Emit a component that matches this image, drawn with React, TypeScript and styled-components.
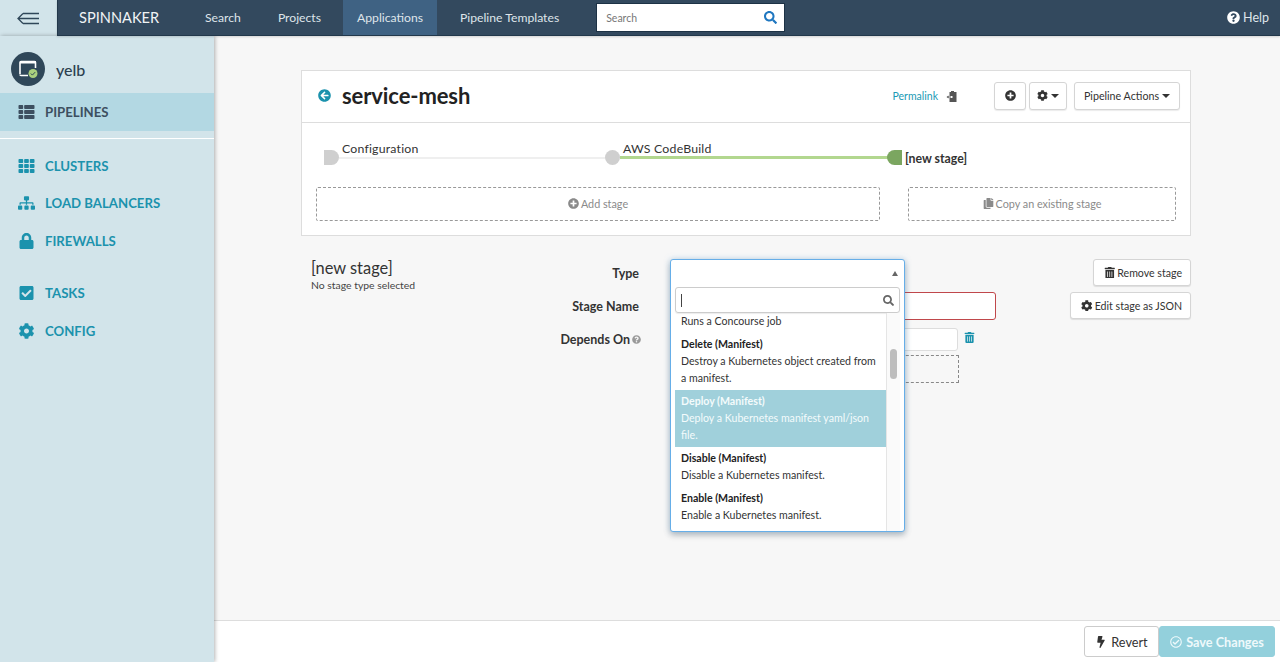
import React from "react";
import styled, { createGlobalStyle } from "styled-components";
import {
  FaThList, FaTh, FaSitemap, FaLock, FaCheckSquare, FaCog, FaPlusCircle, FaArrowCircleLeft,
  FaTrashAlt, FaCopy, FaQuestionCircle, FaBolt, FaRegCheckCircle, FaSearch,
} from "react-icons/fa";

const Global = createGlobalStyle`
  html, body { margin: 0; padding: 0; height: 100%; overflow: hidden; }
  body { font-family: "Lato", "Liberation Sans", sans-serif; font-size: 12px; color: #222; }
  * { box-sizing: border-box; }
`;

const Shell = styled.div`
  width: 1280px; height: 662px; display: grid; overflow: hidden;
  grid-template-columns: 57px 157px 1fr; grid-template-rows: 36px 1fr; background: #f7f7f7;
`;
const Toggle = styled.div`
  grid-column: 1; grid-row: 1; background: #d2e4ea; display: flex; align-items: center; justify-content: center; padding-right: 1px;
`;
const TopBar = styled.header`
  grid-column: 2 / 4; grid-row: 1; background: #33495e; display: flex; align-items: center; color: #e6ebef;
  border-bottom: 1px solid #22384b; border-left: 1px solid #22384b; box-shadow: 0 1px 2px rgba(0,0,0,.15); z-index: 3; padding-left: 21px;
`;
const Brand = styled.div`font-size: 14.6px; width: 112px; font-weight: 400; color: #f0f3f5;`;
const NavLink = styled.div<{ $active?: boolean; $ml?: number; $pl?: number }>`
  height: 35px; display: flex; align-items: center; padding: 0 14px 0 ${p => p.$pl ?? 14}px; font-size: 12.2px; color: #dfe5ea;
  background: ${p => (p.$active ? "#3f6283" : "transparent")}; margin-left: ${p => p.$ml ?? 0}px;
`;
const SearchBox = styled.div`
  width: 189px; height: 29px; margin-left: 23px; background: #fff; display: flex; align-items: center; justify-content: space-between;
  padding: 0 7px 0 9px; font-size: 10.5px; color: #777; border: 1px solid #1d3245; svg { color: #1f77c0; font-size: 13px; }
`;
const Help = styled.div`
  margin-left: auto; padding-right: 11px; display: flex; align-items: center; gap: 3px; font-size: 12.5px; color: #dfe5ea; svg { color: #fff; font-size: 13px; }
`;
const Sidebar = styled.aside`
  grid-column: 1 / 3; grid-row: 2; background: #d2e4ea; box-shadow: 1px 0 4px rgba(0,0,0,.3); z-index: 2; padding-top: 16px; display: flex; flex-direction: column;
`;
const AppRow = styled.div`display: flex; align-items: center; padding-left: 11px; gap: 11px; height: 34px; margin-bottom: 7px;`;
const AppBadge = styled.div`
  width: 34px; height: 34px; border-radius: 50%; background: #2f4759; display: flex; align-items: center; justify-content: center;
`;
const AppName = styled.div`font-size: 16px; font-weight: 500; color: #2c3f50;`;
const SideItem = styled.div<{ $active?: boolean; $gap?: number }>`
  height: 37.5px; display: flex; align-items: center; padding-left: 18px; gap: 10px; font-size: 13.2px; font-weight: 700;
  background: ${p => (p.$active ? "#b3d8e3" : "transparent")}; color: ${p => (p.$active ? "#3d4f60" : "#1b92ad")};
  margin-top: ${p => p.$gap ?? 0}px;
  svg { font-size: 16px; width: 17px; flex: none; }
`;
const SideRule = styled.div`height: 1px; background: #fff; margin: 7px 0 8.5px;`;
const Main = styled.main`grid-column: 3; grid-row: 2; display: flex; flex-direction: column; min-height: 0;`;
const Content = styled.div`flex: 1; padding: 34px 89px 0 87px; min-height: 0;`;
const Card = styled.section`background: #fff; border: 1px solid #ddd; height: 166px;`;
const CardHead = styled.div`
  height: 52px; border-bottom: 1px solid #ddd; display: flex; align-items: center; padding: 0 10px 2px 16px;
`;
const BackIcon = styled.span`color: #1b92ad; font-size: 13px; display: flex; margin-right: 11px;`;
const Title = styled.h1`margin: 0; font-size: 22px; font-weight: 700; color: #222; letter-spacing: -.1px;`;
const Permalink = styled.a`margin-left: auto; color: #1b9ab5; font-size: 10.5px;`;
const ClipIcon = styled.span`display: flex; margin: 0 33px 0 8px;`;
const HeadBtn = styled.button<{ $w: number; $ml?: number }>`
  width: ${p => p.$w}px; height: 28px; margin-left: ${p => p.$ml ?? 3}px; padding: 0; background: #fff; border: 1px solid #d5d5d5; border-radius: 3px;
  box-shadow: 0 1px 1px rgba(0,0,0,.08); font: inherit; font-size: 10.7px; color: #333; display: flex; align-items: center; justify-content: center; gap: 3px;
`;
const Caret = styled.span`
  display: inline-block; width: 0; height: 0; border-left: 4px solid transparent; border-right: 4px solid transparent; border-top: 4px solid #333;
`;
const Graph = styled.div`position: relative; height: 64px;`;
const GraphLine = styled.div<{ $x: number; $w: number; $on?: boolean }>`
  position: absolute; left: ${p => p.$x}px; width: ${p => p.$w}px; top: ${p => (p.$on ? 33 : 34)}px; height: ${p => (p.$on ? 3 : 2)}px;
  background: ${p => (p.$on ? "#b2d78f" : "#efefef")};
`;
const Node = styled.div<{ $x: number; $shape: "start" | "mid" | "end" }>`
  position: absolute; left: ${p => p.$x}px; top: 27px; width: 15px; height: 15px;
  background: ${p => (p.$shape === "end" ? "#7ba660" : "#cfcfcf")};
  border-radius: ${p => (p.$shape === "start" ? "0 8px 8px 0" : p.$shape === "mid" ? "50%" : "8px 0 0 8px")};
`;
const NodeLabel = styled.div<{ $x: number; $y: number; $strong?: boolean }>`
  position: absolute; left: ${p => p.$x}px; top: ${p => p.$y}px; line-height: 16px; font-size: 12.3px; letter-spacing: ${p => (p.$strong ? 0 : ".2px")};
  font-weight: ${p => (p.$strong ? 700 : 400)}; color: #333; white-space: nowrap;
`;
const AddRow = styled.div`display: flex; justify-content: space-between; padding: 0 14px;`;
const DashedBtn = styled.div<{ $w: number }>`
  width: ${p => p.$w}px; height: 34px; border: 1px dashed #999; border-radius: 2px; display: flex; align-items: center; justify-content: center; gap: 2px;
  color: #8a8a8a; font-size: 10.8px; padding-bottom: 2px; svg { font-size: 11px; }
`;
const Editor = styled.div`display: flex; margin-top: 23px; padding: 0 0 0 10px;`;
const StageIntro = styled.div`width: 228px; padding-top: 0;`;
const StageTitle = styled.div`font-size: 16.4px; line-height: 18px; color: #333;`;
const StageSub = styled.div`font-size: 10.4px; line-height: 13px; margin-top: 2px; color: #444;`;
const Form = styled.div`display: grid; grid-template-columns: 100px 327px; column-gap: 31px; grid-auto-rows: 33px; width: 458px;`;
const FieldLabel = styled.div`
  font-size: 12.5px; font-weight: 700; color: #333; text-align: right; padding-top: 7px; display: flex; justify-content: flex-end; gap: 2px;
  svg { font-size: 9px; color: #999; margin: 3px -2px 0 0; }
`;
const FieldCell = styled.div`position: relative; display: flex; align-items: flex-start; gap: 6px;`;
const FieldInput = styled.div<{ $w: number; $h: number; $top?: number; $bad?: boolean }>`
  width: ${p => p.$w}px; height: ${p => p.$h}px; margin-top: ${p => p.$top ?? 0}px; background: #fff; border: 1px solid ${p => (p.$bad ? "#c0474b" : "#ddd")}; border-radius: 3px; flex: none;
`;
const DashedField = styled.div`position: absolute; left: 0; top: 30px; width: 289px; height: 28px; border: 1px dashed #888;`;
const TrashLink = styled.span`color: #1b92ad; font-size: 11px; display: flex; margin-top: 7px;`;
const SideActions = styled.div`margin-left: auto; display: flex; flex-direction: column; align-items: flex-end; gap: 6px;`;
const ActionBtn = styled.button`
  height: 27px; padding: 0 8px 0 10px; background: #fff; border: 1px solid #d5d5d5; border-radius: 3px; box-shadow: 0 1px 1px rgba(0,0,0,.1);
  font: inherit; font-size: 10.6px; color: #333; display: flex; align-items: center; gap: 2px; svg { font-size: 11.5px; }
`;
const Dropdown = styled.div`
  position: absolute; left: 0; top: 0; width: 235px; height: 273px; background: #fff; border: 1px solid #66aee8; border-radius: 3px;
  box-shadow: 0 0 6px rgba(102,174,232,.35), 0 3px 6px rgba(0,0,0,.25); z-index: 5; padding: 0 4px; display: flex; flex-direction: column;
`;
const TypeBar = styled.div`height: 27px; display: flex; justify-content: flex-end; align-items: center; padding: 0 2px 1px 0;`;
const UpCaret = styled.span`width: 0; height: 0; border-left: 3px solid transparent; border-right: 3px solid transparent; border-bottom: 5px solid #666;`;
const DropSearch = styled.div`
  height: 26px; flex: none; border: 1px solid #ccc; border-radius: 3px; box-shadow: 0 1px 1px rgba(0,0,0,.08); display: flex; align-items: center; justify-content: space-between;
  padding: 0 5px; svg { font-size: 11px; color: #666; }
`;
const Cursor = styled.span`width: 1px; height: 13px; background: #444;`;
const ListWrap = styled.div`flex: 1; display: flex; min-height: 0; overflow: hidden;`;
const OptionList = styled.div`flex: 1; min-width: 0; overflow: hidden;`;
const Option = styled.div<{ $on?: boolean; $cut?: boolean }>`
  padding: ${p => (p.$cut ? "0 6px 3px" : "3px 6px")}; font-size: 10.6px; line-height: 17px;
  background: ${p => (p.$on ? "#a0d0db" : "transparent")}; color: ${p => (p.$on ? "#f4fbfc" : "#333")};
  b { display: block; color: ${p => (p.$on ? "#f4fbfc" : "#222")}; font-weight: 700; }
`;
const Track = styled.div`width: 14px; flex: none; background: #fafafa; border-left: 1px solid #e5e5e5; padding: 36px 3px 0 3px;`;
const Thumb = styled.div`height: 30px; border-radius: 4px; background: #bdbdbd;`;
const Footer = styled.footer`
  height: 42px; flex: none; background: #fff; border-top: 1px solid #ddd; display: flex; justify-content: flex-end; padding: 5px 5px 0 0;
`;
const FootBtn = styled.button<{ $save?: boolean }>`
  height: 31px; border: 1px solid ${p => (p.$save ? "#93d0dc" : "#ccc")}; border-radius: 3px; background: ${p => (p.$save ? "#93d0dc" : "#fff")};
  color: ${p => (p.$save ? "#eef9fb" : "#333")}; font: inherit; font-size: 12.7px; font-weight: ${p => (p.$save ? 700 : 400)};
  width: ${p => (p.$save ? 116 : 75)}px; display: flex; align-items: center; justify-content: center; gap: 4px; padding: 0; svg { font-size: 12px; }
`;

const options = [
  { t: "Delete (Manifest)", d: "Destroy a Kubernetes object created from a manifest." },
  { t: "Deploy (Manifest)", d: "Deploy a Kubernetes manifest yaml/json file.", on: true },
  { t: "Disable (Manifest)", d: "Disable a Kubernetes manifest." },
  { t: "Enable (Manifest)", d: "Enable a Kubernetes manifest." },
];

export default function App() {
  return (
    <Shell>
      <Global />
      <Toggle>
        <svg width="23" height="13" viewBox="0 0 23 13" fill="none" stroke="#2f4759" strokeWidth="1.3">
          <path d="M6 1.5H22M1 6.5H22M6 11.5H22M6 1.5L1 6.5L6 11.5" />
        </svg>
      </Toggle>
      <TopBar>
        <Brand>SPINNAKER</Brand>
        <NavLink>Search</NavLink>
        <NavLink $ml={9} $pl={14}>Projects</NavLink>
        <NavLink $active $ml={8}>Applications</NavLink>
        <NavLink $ml={9}>Pipeline Templates</NavLink>
        <SearchBox>Search<FaSearch /></SearchBox>
        <Help><FaQuestionCircle />Help</Help>
      </TopBar>
      <Sidebar>
        <AppRow>
          <AppBadge>
            <svg width="22" height="20" viewBox="0 0 22 20">
              <path d="M3 15V3.5A1 1 0 0 1 4 2.5H17.5A1 1 0 0 1 18.5 3.5V9M3 15.5A1 1 0 0 0 4 16.5H11" fill="none" stroke="#fff" strokeWidth="1.6" />
              <rect x="3" y="2" width="16" height="2.5" fill="#fff" />
              <circle cx="16" cy="14.5" r="4.5" fill="#a9cf7e" />
              <path d="M13.8 14.5l1.6 1.6 2.8-3" fill="none" stroke="#2f4759" strokeWidth="1" />
            </svg>
          </AppBadge>
          <AppName>yelb</AppName>
        </AppRow>
        <SideItem $active><FaThList />PIPELINES</SideItem>
        <SideRule />
        <SideItem><FaTh />CLUSTERS</SideItem>
        <SideItem><FaSitemap />LOAD BALANCERS</SideItem>
        <SideItem><FaLock />FIREWALLS</SideItem>
        <SideItem $gap={15}><FaCheckSquare />TASKS</SideItem>
        <SideItem><FaCog />CONFIG</SideItem>
      </Sidebar>
      <Main>
        <Content>
          <Card>
            <CardHead>
              <BackIcon><FaArrowCircleLeft /></BackIcon>
              <Title>service-mesh</Title>
              <Permalink>Permalink</Permalink>
              <ClipIcon>
                <svg width="12" height="12" viewBox="0 0 12 12" fill="#555">
                  <path d="M3.5 2H5V1h3v1h2.5v10H3.5V8h3V6h-3zM0.5 7l2-1.5V6.5H5v1H2.5v1z" />
                </svg>
              </ClipIcon>
              <HeadBtn $w={32}><FaPlusCircle size={11} /></HeadBtn>
              <HeadBtn $w={38}><FaCog size={11} /><Caret /></HeadBtn>
              <HeadBtn $w={106} $ml={7}>Pipeline Actions<Caret /></HeadBtn>
            </CardHead>
            <Graph>
              <GraphLine $x={37} $w={268} />
              <GraphLine $x={318} $w={268} $on />
              <Node $x={22} $shape="start" />
              <Node $x={303} $shape="mid" />
              <Node $x={585} $shape="end" />
              <NodeLabel $x={40} $y={18}>Configuration</NodeLabel>
              <NodeLabel $x={321} $y={18}>AWS CodeBuild</NodeLabel>
              <NodeLabel $x={603} $y={28} $strong>[new stage]</NodeLabel>
            </Graph>
            <AddRow>
              <DashedBtn $w={564}><FaPlusCircle />Add stage</DashedBtn>
              <DashedBtn $w={268}><FaCopy />Copy an existing stage</DashedBtn>
            </AddRow>
          </Card>
          <Editor>
            <StageIntro>
              <StageTitle>[new stage]</StageTitle>
              <StageSub>No stage type selected</StageSub>
            </StageIntro>
            <Form>
              <FieldLabel>Type</FieldLabel>
              <FieldCell>
                <Dropdown>
                  <TypeBar><UpCaret /></TypeBar>
                  <DropSearch><Cursor /><FaSearch /></DropSearch>
                  <ListWrap>
                    <OptionList>
                      <Option $cut>Runs a Concourse job</Option>
                      {options.map(o => (
                        <Option key={o.t} $on={o.on}><b>{o.t}</b>{o.d}</Option>
                      ))}
                    </OptionList>
                    <Track><Thumb /></Track>
                  </ListWrap>
                </Dropdown>
              </FieldCell>
              <FieldLabel>Stage Name</FieldLabel>
              <FieldCell><FieldInput $w={326} $h={28} $bad /></FieldCell>
              <FieldLabel>Depends On<FaQuestionCircle /></FieldLabel>
              <FieldCell>
                <FieldInput $w={288} $h={23} $top={3} />
                <TrashLink><FaTrashAlt /></TrashLink>
                <DashedField />
              </FieldCell>
            </Form>
            <SideActions>
              <ActionBtn><FaTrashAlt />Remove stage</ActionBtn>
              <ActionBtn><FaCog />Edit stage as JSON</ActionBtn>
            </SideActions>
          </Editor>
        </Content>
        <Footer>
          <FootBtn><FaBolt />Revert</FootBtn>
          <FootBtn $save><FaRegCheckCircle />Save Changes</FootBtn>
        </Footer>
      </Main>
    </Shell>
  );
}
